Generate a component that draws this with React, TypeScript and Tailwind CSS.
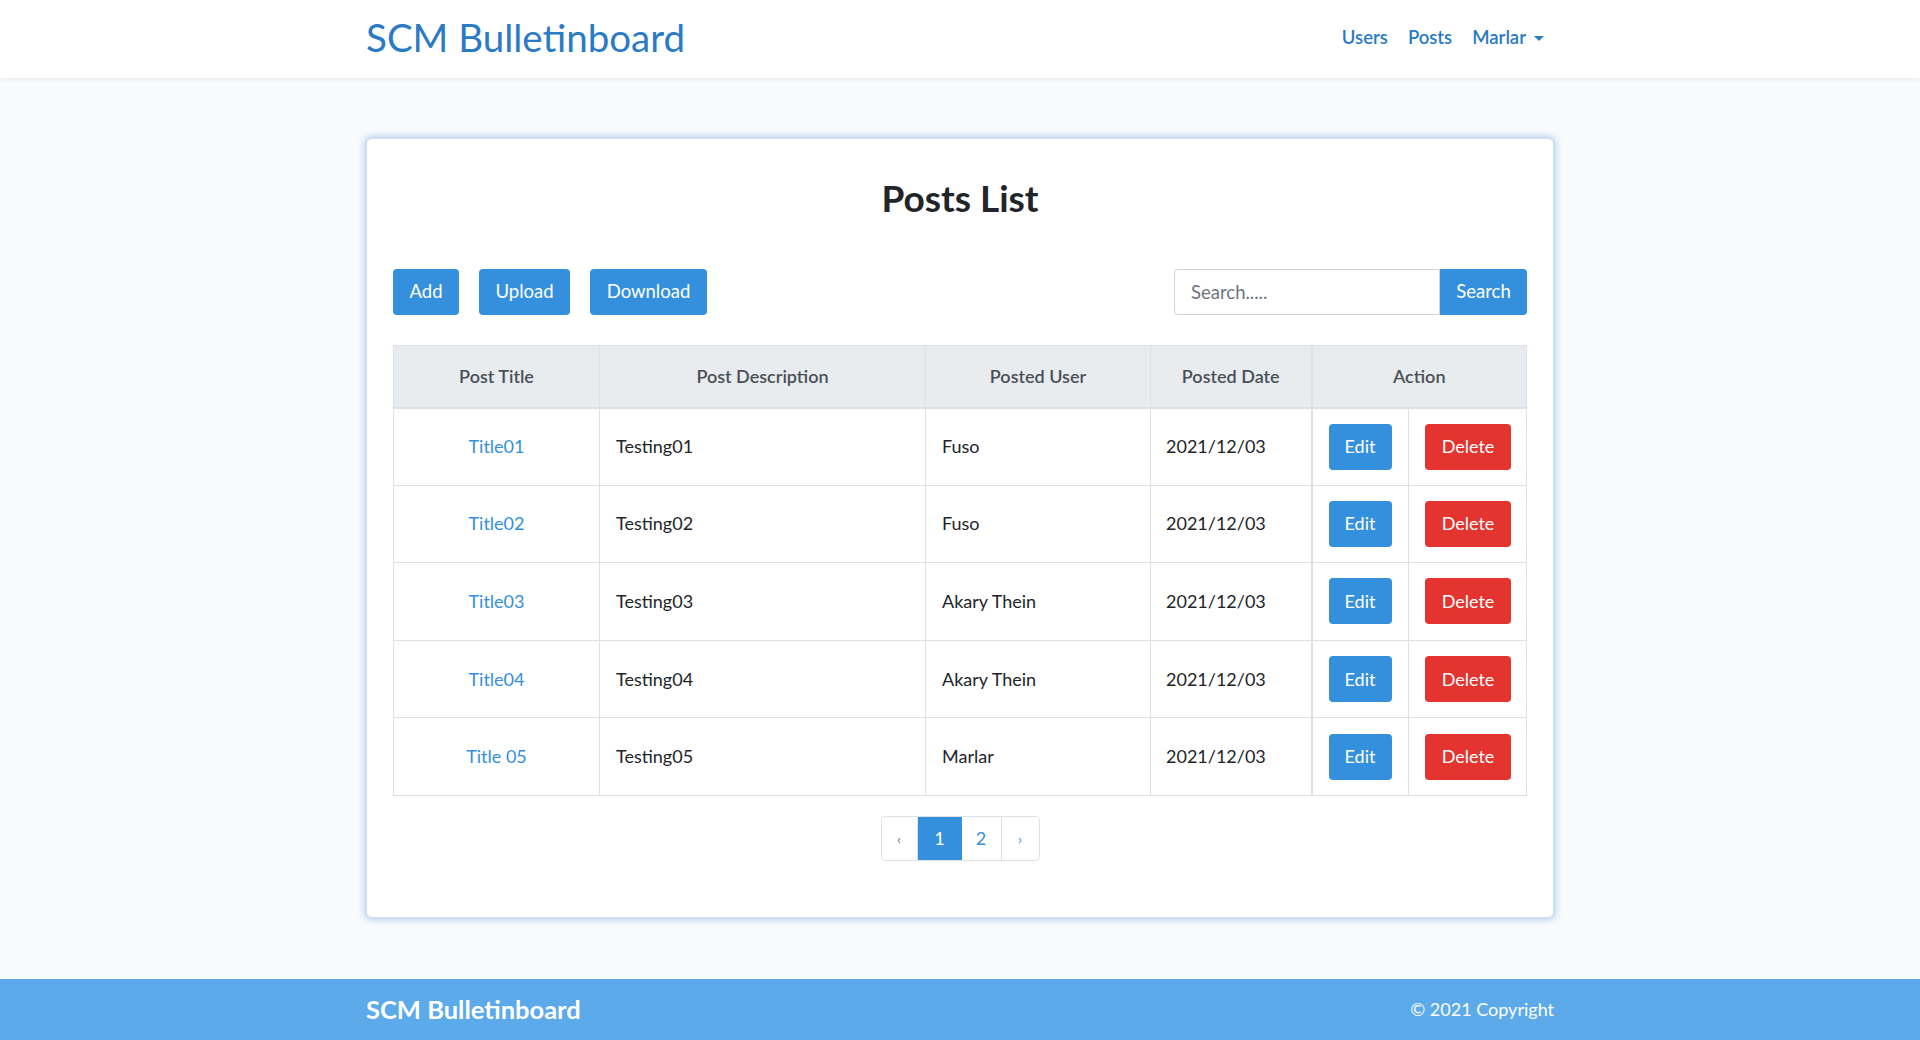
import React from "react";

const posts = [
  { title: "Title01", desc: "Testing01", user: "Fuso", date: "2021/12/03" },
  { title: "Title02", desc: "Testing02", user: "Fuso", date: "2021/12/03" },
  { title: "Title03", desc: "Testing03", user: "Akary Thein", date: "2021/12/03" },
  { title: "Title04", desc: "Testing04", user: "Akary Thein", date: "2021/12/03" },
  { title: "Title 05", desc: "Testing05", user: "Marlar", date: "2021/12/03" },
];

export default function App() {
  return (
    <div className="min-h-screen bg-[#f8fafc] font-['Lato',sans-serif] text-[18px] text-[#212529] flex flex-col">
      {/* Header */}
      <header className="h-[78px] bg-white shadow-[0_2px_4px_rgba(0,0,0,0.05)] relative z-10">
        <div className="w-[1188px] mx-auto h-full flex items-center justify-between">
          <div className="text-[38.5px] text-[#2a7ac5] leading-none pb-[4px]">SCM Bulletinboard</div>
          <nav className="flex items-center text-[18.5px] font-semibold text-[#2a7ac5] pr-[10px] pb-[2px]">
            <a className="px-[8px]">Users</a>
            <a className="px-[12px]">Posts</a>
            <a className="pl-[8px] flex items-center gap-[8px]">
              Marlar
              <span className="inline-block w-0 h-0 border-x-[5px] border-x-transparent border-t-[5px] border-t-[#2a7ac5]" />
            </a>
          </nav>
        </div>
      </header>

      {/* Main */}
      <main className="flex-1 py-[60px]">
        <div className="w-[1188px] mx-auto bg-white rounded-[6px] border border-[#d5dde5] shadow-[0_0_6px_2px_rgba(52,144,220,0.35)] px-[26px] pt-[41px] pb-[56px]">
          <h2 className="text-center text-[37px] font-bold text-[#212529] leading-[36px]">Posts List</h2>

          <div className="mt-[53px] flex items-center justify-between">
            <div className="flex gap-[20px]">
              <button className="h-[46px] w-[66px] rounded-[4px] bg-[#3490dc] text-white text-[18.5px]">Add</button>
              <button className="h-[46px] w-[91px] rounded-[4px] bg-[#3490dc] text-white text-[18.5px]">Upload</button>
              <button className="h-[46px] w-[117px] rounded-[4px] bg-[#3490dc] text-white text-[18.5px]">Download</button>
            </div>
            <div className="flex">
              <input
                placeholder="Search....."
                className="w-[266px] h-[46px] border border-[#ced4da] rounded-l-[4px] px-[16px] text-[18.5px] placeholder:text-[#6c757d] outline-none"
              />
              <button className="h-[46px] w-[87px] rounded-r-[4px] bg-[#3490dc] text-white text-[18.5px]">Search</button>
            </div>
          </div>

          <table className="mt-[30px] w-[1134px] border-collapse border border-[#dee2e6]">
            <thead>
              <tr className="h-[62px] bg-[#e9ecef] text-[#495057] font-semibold">
                <th className="w-[206px] border border-[#dee2e6] border-b-2 font-semibold">Post Title</th>
                <th className="w-[326px] border border-[#dee2e6] border-b-2 font-semibold">Post Description</th>
                <th className="w-[225px] border border-[#dee2e6] border-b-2 font-semibold">Posted User</th>
                <th className="w-[161px] border border-[#dee2e6] border-b-2 font-semibold">Posted Date</th>
                <th colSpan={2} className="border border-[#dee2e6] border-b-2 border-l-2 font-semibold">Action</th>
              </tr>
            </thead>
            <tbody>
              {posts.map((p) => (
                <tr key={p.title} className="h-[77.6px]">
                  <td className="border border-[#dee2e6] text-center text-[#3490dc]">{p.title}</td>
                  <td className="border border-[#dee2e6] px-[16px]">{p.desc}</td>
                  <td className="border border-[#dee2e6] px-[16px]">{p.user}</td>
                  <td className="border border-[#dee2e6] px-[15px]">{p.date}</td>
                  <td className="w-[97px] border border-[#dee2e6] border-l-2 pl-[16px]">
                    <button className="h-[46px] w-[63px] rounded-[4px] bg-[#3490dc] text-white">Edit</button>
                  </td>
                  <td className="border border-[#dee2e6] pl-[16px]">
                    <button className="h-[46px] w-[86px] rounded-[4px] bg-[#e3342f] text-white">Delete</button>
                  </td>
                </tr>
              ))}
            </tbody>
          </table>

          <div className="mt-[20px] flex justify-center">
            <div className="flex h-[45px] border border-[#dee2e6] rounded-[4px] overflow-hidden">
              <span className="w-[36px] flex items-center justify-center text-[14px] text-[#6c757d] border-r border-[#dee2e6]">‹</span>
              <span className="w-[44px] flex items-center justify-center bg-[#3490dc] text-white">1</span>
              <span className="w-[40px] flex items-center justify-center text-[#3490dc] border-r border-[#dee2e6]">2</span>
              <span className="w-[37px] flex items-center justify-center text-[14px] text-[#3490dc]">›</span>
            </div>
          </div>
        </div>
      </main>

      {/* Footer */}
      <footer className="h-[61px] bg-[#5daaea] text-white">
        <div className="w-[1188px] mx-auto h-full flex items-center justify-between">
          <div className="text-[25.5px] font-bold">SCM Bulletinboard</div>
          <div className="text-[18px]">© 2021 Copyright</div>
        </div>
      </footer>
    </div>
  );
}
